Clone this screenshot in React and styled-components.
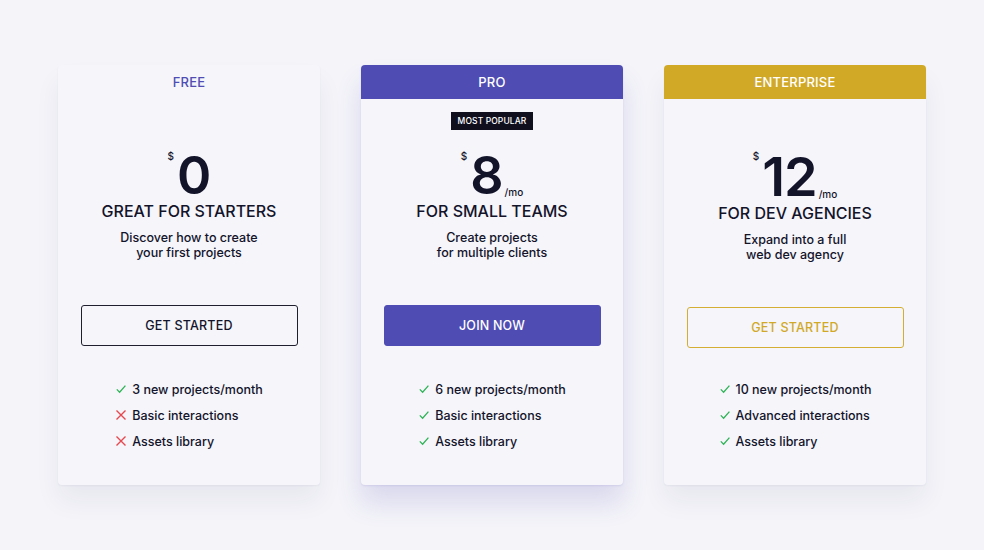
import React from "react";
import styled, { createGlobalStyle } from "styled-components";

const GlobalStyle = createGlobalStyle`
  body {
    margin: 0;
    background-color: #f4f4f9;
    font-family: Inter, "Noto Sans", sans-serif;
    color: #13132a;
  }
`;

const Page = styled.div`
  width: 984px;
  height: 550px;
  display: flex;
  justify-content: center;
  align-items: flex-start;
  gap: 41px;
  padding-top: 65px;
  box-sizing: border-box;
`;

const Card = styled.div`
  width: 262px;
  height: 420px;
  padding-bottom: 31px;
  box-sizing: border-box;
  background-color: #f5f5fa;
  border-radius: 4px;
  overflow: hidden;
  display: flex;
  flex-direction: column;
  align-items: center;
  box-shadow: ${(props) =>
    props.$featured
      ? "0 18px 26px rgba(79, 77, 179, 0.16), 0 1px 2px rgba(79, 77, 179, 0.12)"
      : "0 16px 26px rgba(40, 40, 90, 0.06), 0 1px 2px rgba(40, 40, 90, 0.05)"};
`;

const Header = styled.div`
  width: 100%;
  height: 34px;
  flex-shrink: 0;
  display: flex;
  align-items: center;
  justify-content: center;
  font-size: 13px;
  font-weight: 500;
  letter-spacing: 0.2px;
  background-color: ${(props) => props.$bg || "transparent"};
  color: ${(props) => (props.$bg ? "#ffffff" : "#4f4db3")};
`;

const Badge = styled.div`
  margin-top: 13px;
  height: 18px;
  padding: 0 7px;
  display: flex;
  align-items: center;
  background-color: #0f0f1e;
  color: #ffffff;
  font-size: 8.5px;
  font-weight: 500;
  letter-spacing: 0.1px;
  visibility: ${(props) => (props.$show ? "visible" : "hidden")};
`;

const PriceRow = styled.div`
  margin-top: 20px;
  display: flex;
  align-items: flex-end;
  line-height: 1;
`;

const Currency = styled.span`
  align-self: flex-start;
  font-size: 10px;
  font-weight: 500;
  margin-top: 1px;
  margin-right: 3px;
`;

const Amount = styled.span`
  font-size: ${(props) => props.$size}px;
  font-weight: 600;
  letter-spacing: -1px;
  line-height: ${(props) => props.$size}px;
`;

const Period = styled.span`
  font-size: 10px;
  font-weight: 500;
  margin-left: 2px;
  margin-bottom: 5px;
  display: ${(props) => (props.$show ? "inline" : "none")};
`;

const Title = styled.div`
  margin-top: -1px;
  font-size: 16px;
  font-weight: 500;
  line-height: 20px;
`;

const Description = styled.div`
  margin-top: 9px;
  text-align: center;
  font-size: 12.5px;
  font-weight: 500;
  line-height: 15px;
`;

const Button = styled.button`
  margin-top: 45px;
  width: 217px;
  height: 41px;
  flex-shrink: 0;
  border-radius: 3px;
  font-family: Inter, "Noto Sans", sans-serif;
  font-size: 12.5px;
  font-weight: 500;
  letter-spacing: 0.2px;
  cursor: pointer;
  border-width: 1px;
  border-style: solid;
  border-color: ${(props) => props.$border};
  background-color: ${(props) => props.$bg || "transparent"};
  color: ${(props) => props.$color};
`;

const Features = styled.ul`
  list-style: none;
  margin: auto 0 0;
  padding: 0;
`;

const Feature = styled.li`
  height: 26px;
  display: flex;
  align-items: center;
  gap: 5px;
  font-size: 12.5px;
  font-weight: 500;
`;

const Mark = styled.svg`
  width: 12px;
  height: 12px;
  flex-shrink: 0;
`;

const Check = () => (
  <Mark viewBox="0 0 12 12" fill="none" stroke="#2fb457" strokeWidth="1.3">
    <path d="M1.8 6.4 L4.6 9.2 L10.4 2.6" />
  </Mark>
);

const Cross = () => (
  <Mark viewBox="0 0 12 12" fill="none" stroke="#e5484d" strokeWidth="1.4">
    <path d="M1.5 1.5 L10.5 10.5 M10.5 1.5 L1.5 10.5" />
  </Mark>
);

const plans = [
  {
    name: "FREE",
    price: "0",
    size: 52,
    perMonth: false,
    title: "GREAT FOR STARTERS",
    text: ["Discover how to create", "your first projects"],
    cta: "GET STARTED",
    button: { $border: "#1e1e2e", $color: "#13132a" },
    features: [
      ["3 new projects/month", true],
      ["Basic interactions", false],
      ["Assets library", false],
    ],
  },
  {
    name: "PRO",
    headerBg: "#4f4db3",
    popular: true,
    price: "8",
    size: 52,
    perMonth: true,
    featured: true,
    title: "FOR SMALL TEAMS",
    text: ["Create projects", "for multiple clients"],
    cta: "JOIN NOW",
    button: { $border: "#4f4db3", $bg: "#4f4db3", $color: "#ffffff" },
    features: [
      ["6 new projects/month", true],
      ["Basic interactions", true],
      ["Assets library", true],
    ],
  },
  {
    name: "ENTERPRISE",
    headerBg: "#d1a927",
    price: "12",
    size: 54,
    perMonth: true,
    title: "FOR DEV AGENCIES",
    text: ["Expand into a full", "web dev agency"],
    cta: "GET STARTED",
    button: { $border: "#d4ae33", $color: "#d1a927" },
    features: [
      ["10 new projects/month", true],
      ["Advanced interactions", true],
      ["Assets library", true],
    ],
  },
];

export default function App() {
  return (
    <>
      <GlobalStyle />
      <Page>
        {plans.map((plan) => (
          <Card key={plan.name} $featured={plan.featured}>
            <Header $bg={plan.headerBg}>{plan.name}</Header>
            <Badge $show={plan.popular}>MOST POPULAR</Badge>
            <PriceRow>
              <Currency>$</Currency>
              <Amount $size={plan.size}>{plan.price}</Amount>
              <Period $show={plan.perMonth}>/mo</Period>
            </PriceRow>
            <Title>{plan.title}</Title>
            <Description>
              {plan.text[0]}
              <br />
              {plan.text[1]}
            </Description>
            <Button {...plan.button}>{plan.cta}</Button>
            <Features>
              {plan.features.map(([label, ok]) => (
                <Feature key={label}>
                  {ok ? <Check /> : <Cross />}
                  {label}
                </Feature>
              ))}
            </Features>
          </Card>
        ))}
      </Page>
    </>
  );
}
